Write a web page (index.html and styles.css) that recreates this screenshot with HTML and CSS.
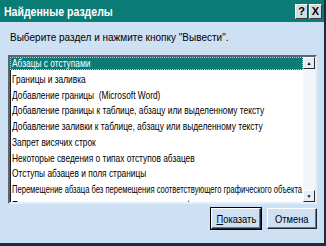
FILE: index.html
```html
<!DOCTYPE html>
<html lang="ru">
<head>
    <meta charset="UTF-8">
    <title>Найденные разделы</title>
    <link rel="stylesheet" href="styles.css">
</head>
<body>
    <div class="window">
        <div class="titlebar">
            <span class="title">Найденные разделы</span>
            <div class="tb-buttons">
                <span class="tb-btn">?</span>
                <span class="tb-btn">X</span>
            </div>
        </div>
        <div class="content">
            <p class="prompt"><span>Выберите раздел и нажмите кнопку "Вывести".</span></p>
            <div class="listbox">
                <ul class="items">
                    <li class="selected"><span>Абзацы с отступами</span></li>
                    <li><span>Границы и заливка</span></li>
                    <li><span>Добавление границы&nbsp; (Microsoft Word)</span></li>
                    <li><span>Добавление границы к таблице, абзацу или выделенному тексту</span></li>
                    <li><span>Добавление заливки к таблице, абзацу или выделенному тексту</span></li>
                    <li><span>Запрет висячих строк</span></li>
                    <li><span>Некоторые сведения о типах отступов абзацев</span></li>
                    <li><span>Отступы абзацев и поля страницы</span></li>
                    <li class="long"><span>Перемещение абзаца без перемещения соответствующего графического объекта</span></li>
                    <li><span>Перемещение или копирование текста и графики</span></li>
                </ul>
                <div class="scrollbar">
                    <div class="sb-btn">&#9650;</div>
                    <div class="sb-track"></div>
                    <div class="sb-btn">&#9660;</div>
                </div>
            </div>
            <div class="actions">
                <button class="btn default"><span><u>П</u>оказать</span></button>
                <button class="btn"><span>Отмена</span></button>
            </div>
        </div>
    </div>
</body>
</html>
```

FILE: styles.css
```css
body {
    margin: 0;
    font-family: "Liberation Sans", Arial, sans-serif;
    font-size: 11px;
    color: #000;
}
/* el texto del original es muy estrecho: se comprime en horizontal */
.title,
.prompt span,
.items span,
.btn span {
    display: inline-block;
    transform-origin: 0 50%;
    white-space: nowrap;
}
.window {
    width: 326px;
    height: 246px;
    box-sizing: border-box;
    background: #cde0f4;
    border-right: 2px solid #1c2b3f;
    border-bottom: 3px solid #1c2b3f;
}
.titlebar {
    height: 22px;
    background: #0b7b76;
    display: flex;
    align-items: center;
    justify-content: space-between;
    padding: 0 2px 0 4px;
}
.title {
    color: #fff;
    font-weight: bold;
    font-size: 13px;
    transform: scaleX(0.81);
}
.tb-buttons {
    display: flex;
    gap: 1px;
}
.tb-btn {
    width: 11px;
    height: 13px;
    background: #d6dbe0;
    border: 1px solid;
    border-color: #fff #3a3a3a #3a3a3a #fff;
    font-weight: bold;
    font-size: 11px;
    line-height: 13px;
    text-align: center;
}
.content {
    padding: 0 7px 0 8px;
}
.prompt {
    margin: 8px 0 11px 2px;
    line-height: 14px;
}
.prompt span {
    transform: scaleX(0.91);
}
.listbox {
    height: 149px;
    box-sizing: border-box;
    background: #fff;
    border: 2px solid;
    border-color: #5b6470 #e8eef6 #e8eef6 #5b6470;
    box-shadow: inset 1px 1px 0 #1a1a1a;
    display: flex;
    overflow: hidden;
}
.items {
    flex: 1;
    list-style: none;
    margin: 0;
    padding: 0;
    overflow: hidden;
}
.items li {
    height: 15.75px;
    line-height: 13px;
    padding-left: 2px;
    white-space: nowrap;
}
.items span {
    transform: scaleX(0.76);
}
.items li.long span {
    transform: scaleX(0.69);
}
.items li.selected {
    background: #0b7b76;
    color: #fff;
    height: 13px;
    margin-bottom: 2.75px;
    outline: 1px dotted #9fd6d2;
    outline-offset: -1px;
}
.scrollbar {
    width: 12px;
    display: flex;
    flex-direction: column;
    background: #f2f6fb;
}
.sb-btn {
    height: 12px;
    box-sizing: border-box;
    background: #e4ecf5;
    border: 1px solid;
    border-color: #fff #2a2a2a #2a2a2a #fff;
    font-size: 5px;
    line-height: 10px;
    text-align: center;
}
.sb-track {
    flex: 1;
}
.actions {
    display: flex;
    justify-content: flex-end;
    gap: 6px;
    margin-top: 4px;
}
.btn {
    width: 50px;
    height: 21px;
    padding: 0;
    font-family: inherit;
    font-size: 11px;
    background: #cde0f4;
    border: 1px solid;
    border-color: #fff #1f2630 #1f2630 #fff;
    box-shadow: inset -1px -1px 0 #6b7684;
}
.btn span {
    transform: scaleX(0.85);
    transform-origin: 50% 50%;
}
.btn.default {
    outline: 1px solid #000;
}
```
